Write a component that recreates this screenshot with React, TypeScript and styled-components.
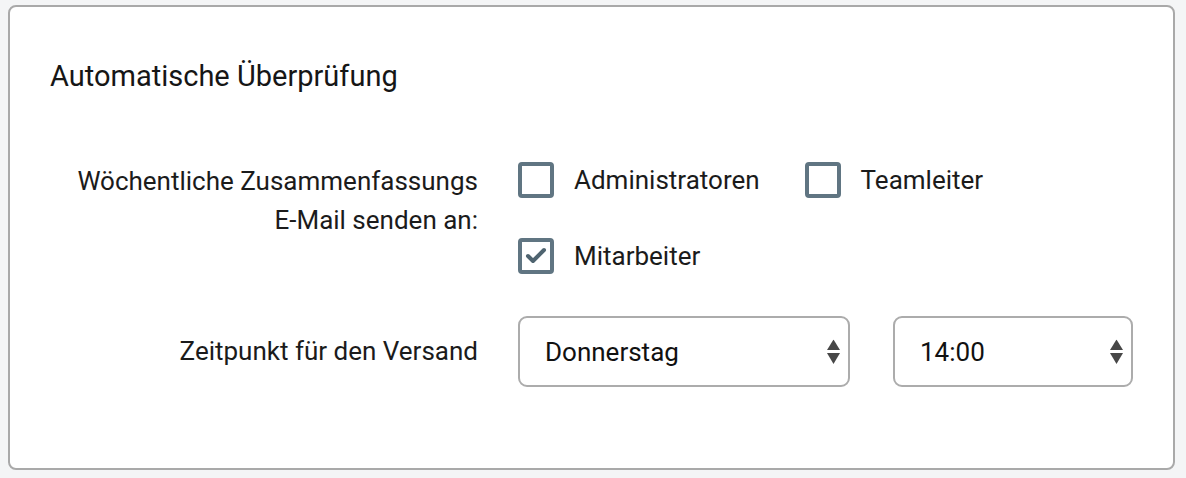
import React, { useState } from "react";
import styled, { createGlobalStyle } from "styled-components";

const Global = createGlobalStyle`
  html, body { margin: 0; padding: 0; background: #f4f5f6; }
  body { font-family: Roboto, "Liberation Sans", Arial, sans-serif; color: #1b1b1b; }
  * { box-sizing: border-box; }
`;

const Page = styled.div`
  padding: 5px 11px 8px 8px;
`;

const Card = styled.section`
  background: #ffffff;
  border: 2px solid #a9a9a9;
  border-radius: 8px;
  padding: 53px 40px 81px 40px;
`;

const Title = styled.h2`
  margin: 0 0 70px 0;
  font-size: 29px;
  font-weight: 400;
  line-height: 32px;
  color: #161616;
`;

const Form = styled.div`
  display: grid;
  grid-template-columns: 428px 1fr;
  column-gap: 40px;
  row-gap: 42px;
  align-items: start;
`;

const Label = styled.div<{ $center?: boolean }>`
  text-align: right;
  font-size: 26px;
  line-height: 39px;
  color: #1b1b1b;
  white-space: nowrap;
  align-self: ${(p) => (p.$center ? "center" : "start")};
`;

const Options = styled.div`
  display: flex;
  flex-wrap: wrap;
  column-gap: 45px;
  row-gap: 40px;
`;

const Option = styled.label`
  display: flex;
  align-items: center;
  gap: 20px;
  font-size: 26px;
  line-height: 36px;
  cursor: pointer;
`;

const Box = styled.span<{ $checked: boolean }>`
  width: 36px;
  height: 36px;
  border: 4px solid #607582;
  border-radius: 4px;
  display: flex;
  align-items: center;
  justify-content: center;
  background: #fff;
  flex: none;
`;

const Selects = styled.div`
  display: grid;
  grid-template-columns: 332px 240px;
  column-gap: 43px;
`;

const SelectWrap = styled.div`
  position: relative;
`;

const Select = styled.select`
  appearance: none;
  -webkit-appearance: none;
  width: 100%;
  height: 71px;
  border: 2px solid #acacac;
  border-radius: 9px;
  background: #fff;
  padding: 0 40px 0 25px;
  font-family: Roboto, "Liberation Sans", Arial, sans-serif;
  font-size: 26px;
  color: #111;
  outline: none;
`;

const Arrows = styled.svg`
  position: absolute;
  right: 10px;
  top: 50%;
  transform: translateY(-50%);
  pointer-events: none;
`;

function Checkbox({ label, initial }: { label: string; initial: boolean }) {
  const [checked, setChecked] = useState(initial);
  return (
    <Option onClick={() => setChecked(!checked)}>
      <Box $checked={checked}>
        {checked && (
          <svg width="28" height="28" viewBox="0 0 28 28">
            <polyline
              points="6,14 11,19 22,8"
              fill="none"
              stroke="#4f6470"
              strokeWidth="4"
              strokeLinecap="round"
              strokeLinejoin="round"
            />
          </svg>
        )}
      </Box>
      {label}
    </Option>
  );
}

function SortArrows() {
  return (
    <Arrows width="13" height="25" viewBox="0 0 13 25">
      <polygon points="6.5,0 13,10.5 0,10.5" fill="#474747" />
      <polygon points="0,13.5 13,13.5 6.5,24.5" fill="#474747" />
    </Arrows>
  );
}

export default function App() {
  return (
    <>
      <Global />
      <Page>
        <Card>
          <Title>Automatische Überprüfung</Title>
          <Form>
            <Label>
              Wöchentliche Zusammenfassungs
              <br />
              E-Mail senden an:
            </Label>
            <Options>
              <Checkbox label="Administratoren" initial={false} />
              <Checkbox label="Teamleiter" initial={false} />
              <Checkbox label="Mitarbeiter" initial={true} />
            </Options>
            <Label $center>Zeitpunkt für den Versand</Label>
            <Selects>
              <SelectWrap>
                <Select defaultValue="Donnerstag">
                  <option>Montag</option>
                  <option>Dienstag</option>
                  <option>Mittwoch</option>
                  <option>Donnerstag</option>
                  <option>Freitag</option>
                </Select>
                <SortArrows />
              </SelectWrap>
              <SelectWrap>
                <Select defaultValue="14:00">
                  <option>12:00</option>
                  <option>13:00</option>
                  <option>14:00</option>
                  <option>15:00</option>
                </Select>
                <SortArrows />
              </SelectWrap>
            </Selects>
          </Form>
        </Card>
      </Page>
    </>
  );
}
